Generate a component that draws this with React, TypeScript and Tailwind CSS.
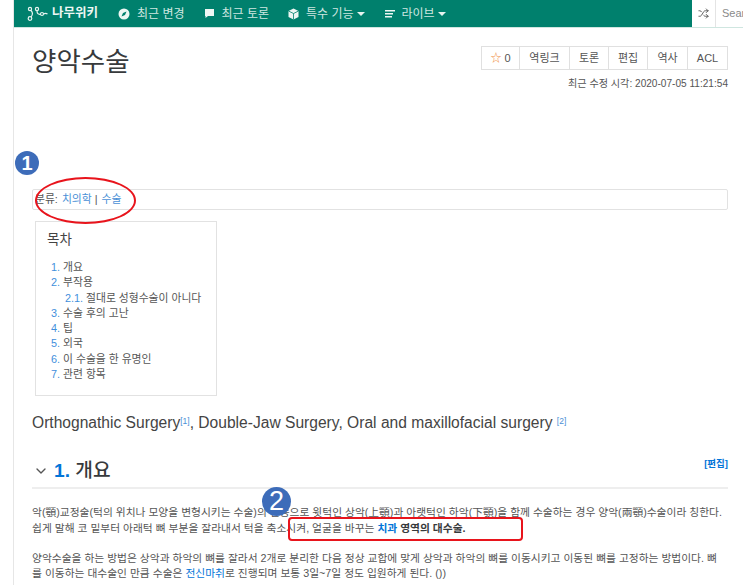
import { ChevronDown, Shuffle } from 'lucide-react';

const kr = "font-['Liberation_Sans','Noto_Sans_CJK_KR',sans-serif]";

const toc = [
  { n: '1.', t: '개요' },
  { n: '2.', t: '부작용' },
  { n: '2.1.', t: '절대로 성형수술이 아니다', sub: true },
  { n: '3.', t: '수술 후의 고난' },
  { n: '4.', t: '팁' },
  { n: '5.', t: '외국' },
  { n: '6.', t: '이 수술을 한 유명인' },
  { n: '7.', t: '관련 항목' },
];

function NavItem({ icon, label, caret }: { icon: React.ReactNode; label: string; caret?: boolean }) {
  return (
    <div className="flex items-center gap-[7px] text-[12px] text-[#cfe7e0]">
      {icon}
      <span>{label}</span>
      {caret && <span className="-ml-[4px] h-0 w-0 border-x-[4px] border-t-[4px] border-x-transparent border-t-[#e6f3ef]" />}
    </div>
  );
}

function Logo() {
  return (
    <div className="flex items-center gap-[3px]">
      <svg width="22" height="16" viewBox="0 0 22 16" fill="none" stroke="#e8f4f0" strokeWidth="1.2">
        <circle cx="3" cy="3" r="1.6" />
        <circle cx="3" cy="12.5" r="1.8" />
        <circle cx="10" cy="3" r="1.6" />
        <circle cx="15" cy="8" r="1.5" />
        <path d="M4 4.500c2 2 2 4 0 6.500M10 4.600c0 3 1 4 3.600 3.600M16.500 8c1.500-1 2.500-1 4 0" />
      </svg>
      <span className="text-[12.500px] font-bold text-[#eef7f4]">나무위키</span>
    </div>
  );
}

function Btn({ children, last }: { children: React.ReactNode; last?: boolean }) {
  return (
    <div className={`flex h-[24px] items-center justify-center border-y border-l border-[#e0e0e0] text-[11px] text-[#555] ${last ? 'border-r' : ''}`}>
      {children}
    </div>
  );
}

export default function App() {
  return (
    <div className={`relative h-[585px] w-[743px] overflow-hidden bg-white ${kr}`}>
      <div className="ml-[13px] h-full border-l border-[#e6e6e6]">
        {/* Navbar */}
        <nav className="flex h-[28px] border-b border-[#cfe6e0]">
          <div className="flex w-[678px] items-center bg-[#00806d] pl-[13px]">
            <Logo />
            <div className="ml-[20px] flex items-center gap-[19px]">
              <NavItem
                label="최근 변경"
                icon={
                  <svg width="12" height="12" viewBox="0 0 12 12">
                    <circle cx="6" cy="6" r="5.500" fill="#eef7f4" />
                    <path d="M8.500 3.500 7 7 3.500 8.500 5 5Z" fill="#00806d" />
                  </svg>
                }
              />
              <NavItem
                label="최근 토론"
                icon={
                  <svg width="11" height="11" viewBox="0 0 11 11">
                    <path d="M1 1h9v7H4L1.500 10V8H1Z" fill="#eef7f4" />
                  </svg>
                }
              />
              <NavItem
                caret
                label="특수 기능"
                icon={
                  <svg width="11" height="12" viewBox="0 0 11 12">
                    <path d="M5.500.5 10.500 3v6l-5 2.500L.5 9V3Z" fill="#eef7f4" />
                    <path d="M.5 3l5 2.500 5-2.500M5.500 5.500v6" stroke="#00806d" strokeWidth=".8" fill="none" />
                  </svg>
                }
              />
              <div className="ml-[1px]">
                <NavItem
                  caret
                  label="라이브"
                  icon={
                    <svg width="10" height="10" viewBox="0 0 10 10" fill="#eef7f4">
                      <path d="M0 1h10v1.500H0ZM0 4h8v1.500H0ZM0 7h7v1.500H0Z" />
                    </svg>
                  }
                />
              </div>
            </div>
          </div>
          <div className="flex flex-1 items-center overflow-hidden">
            <div className="flex h-full w-[24px] shrink-0 items-center justify-center border-r border-[#e4e4e4]">
              <Shuffle size={11} className="text-[#555]" />
            </div>
            <span className="ml-[6px] whitespace-nowrap text-[11px] text-[#8a8a8a]">Sear</span>
          </div>
        </nav>

        <main className="pl-[18px] pr-[15px]">
          {/* Title row */}
          <div className="flex items-start justify-between">
            <h1 className="mt-[16px] text-[26.500px] leading-[36px] text-[#373a3c]">양악수술</h1>
            <div className="mt-[18px] flex flex-col items-end">
              <div className="flex">
                <div className="w-[38px]">
                  <Btn>
                    <span className="mr-[3px] text-[11px] text-[#f08a3c]">☆</span>0
                  </Btn>
                </div>
                <div className="w-[50px]"><Btn>역링크</Btn></div>
                <div className="w-[39px]"><Btn>토론</Btn></div>
                <div className="w-[39px]"><Btn>편집</Btn></div>
                <div className="w-[40px]"><Btn>역사</Btn></div>
                <div className="w-[41px]"><Btn last>ACL</Btn></div>
              </div>
              <p className="mt-[7px] text-[10.100px] leading-[14px] text-[#555]">최근 수정 시각: 2020-07-05 11:21:54</p>
            </div>
          </div>

          {/* Category */}
          <div className="mt-[98px] flex h-[21px] items-center rounded-[2px] border border-[#e2e2e2] pl-[2px] text-[10.800px] text-[#555]">
            분류:&nbsp;<span className="ml-[1px] text-[#4a90d6]">치의학</span>&nbsp;|&nbsp;<span className="ml-[1px] text-[#4a90d6]">수술</span>
          </div>

          {/* TOC */}
          <div className="ml-[3px] mt-[11px] h-[175px] w-[182px] border border-[#e2e2e2] pl-[11px] pt-[8px]">
            <h2 className="text-[13.500px] leading-[20px] text-[#444]">목차</h2>
            <ul className="mt-[10px] pl-[4px] text-[10.800px] leading-[15.300px] text-[#555]">
              {toc.map((item) => (
                <li key={item.n} className={item.sub ? 'pl-[14px]' : ''}>
                  <span className="text-[#3f8fdc]">{item.n}</span> {item.t}
                </li>
              ))}
            </ul>
          </div>

          <p className="mt-[17px] text-[15.600px] leading-[20px] text-[#444]">
            Orthognathic Surgery<sup className="text-[8.500px] text-[#4a90d6]">[1]</sup>, Double-Jaw Surgery, Oral and maxillofacial surgery <sup className="text-[8.500px] text-[#4a90d6]">[2]</sup>
          </p>

          {/* Section heading */}
          <div className="mt-[24px] flex items-center border-b-2 border-[#eeeeee] pb-[3px]">
            <ChevronDown size={16} className="ml-[1px] text-[#555]" />
            <h2 className="ml-[5px] text-[19.200px] font-medium leading-[26px] text-[#373a3c]">
              <span className="font-bold text-[#0275d8]">1.</span> 개요
            </h2>
            <a className="mb-[13px] ml-auto text-[9.500px] font-bold text-[#0275d8]">[편집]</a>
          </div>

          <p className="mt-[16px] text-[10.760px] leading-[15.300px] text-[#555]">
            <span className="block whitespace-nowrap">악(顎)교정술(턱의 위치나 모양을 변형시키는 수술)의 일종으로 윗턱인 상악(上顎)과 아랫턱인 하악(下顎)을 함께 수술하는 경우 양악(兩顎)수술이라 칭한다.</span>
            <span className="block whitespace-nowrap">쉽게 말해 코 밑부터 아래턱 뼈 부분을 잘라내서 턱을 축소시켜, 얼굴을 바꾸는 <strong className="text-[#373a3c]"><span className="text-[#0275d8]">치과</span> 영역의 대수술.</strong></span>
          </p>
          <p className="mt-[15px] text-[10.760px] leading-[15.300px] text-[#555]">
            <span className="block whitespace-nowrap">양악수술을 하는 방법은 상악과 하악의 뼈를 잘라서 2개로 분리한 다음 정상 교합에 맞게 상악과 하악의 뼈를 이동시키고 이동된 뼈를 고정하는 방법이다. 뼈</span>
            <span className="block whitespace-nowrap">를 이동하는 대수술인 만큼 수술은 <span className="text-[#0275d8]">전신마취</span>로 진행되며 보통 3일~7일 정도 입원하게 된다. ())</span>
          </p>
        </main>
      </div>

      {/* Annotations drawn over the capture */}
      <div className="absolute left-[15px] top-[151px] flex h-[24px] w-[24px] items-center justify-center rounded-full bg-[#3d6cb9] text-[20px] font-bold leading-none text-white">1</div>
      <div className="absolute left-[35px] top-[177px] h-[47px] w-[101px] rounded-[50%] border-2 border-[#e8141c]" />
      <div className="absolute left-[262px] top-[487px] flex h-[29px] w-[29px] items-center justify-center rounded-full bg-[#3d6cb9] text-[27px] leading-none text-white">2</div>
      <div className="absolute left-[288px] top-[517px] h-[24px] w-[235px] rounded-[4px] border-2 border-[#e8141c]" />
    </div>
  );
}
